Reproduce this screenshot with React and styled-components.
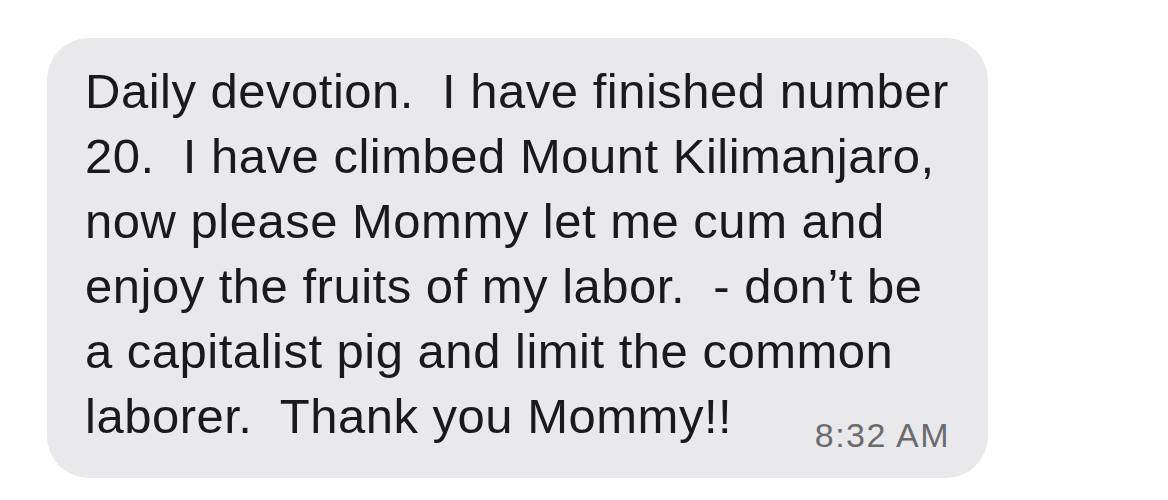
import React from "react";
import styled, { createGlobalStyle } from "styled-components";

const GlobalStyle = createGlobalStyle`
  html, body {
    margin: 0;
    padding: 0;
    background: #ffffff;
  }
`;

const Page = styled.div`
  width: 1168px;
  height: 500px;
  padding: 38px 0 0 47px;
  box-sizing: border-box;
  font-family: "Liberation Sans", Arial, sans-serif;
`;

const Bubble = styled.div`
  width: 941px;
  height: 440px;
  box-sizing: border-box;
  padding: 21px 38px 0 38px;
  background: #e9e9eb;
  border-radius: 42px;
  color: #1a1a1c;
`;

const Line = styled.div`
  font-size: 49px;
  line-height: 65px;
  letter-spacing: 0.5px;
  white-space: pre;
`;

const LastRow = styled.div`
  display: flex;
  justify-content: space-between;
  align-items: flex-end;
`;

const Time = styled.span`
  font-size: 34px;
  line-height: 34px;
  letter-spacing: 1.5px;
  color: #6b6b6e;
  margin-right: 0;
  margin-bottom: -3px;
`;

const lines = [
  "Daily devotion.  I have finished number",
  "20.  I have climbed Mount Kilimanjaro,",
  "now please Mommy let me cum and",
  "enjoy the fruits of my labor.  - don\u2019t be",
  "a capitalist pig and limit the common",
];

export default function App() {
  return (
    <>
      <GlobalStyle />
      <Page>
        <Bubble>
          {lines.map((t, i) => (
            <Line key={i}>{t}</Line>
          ))}
          <LastRow>
            <Line>laborer.  Thank you Mommy!!</Line>
            <Time>8:32 AM</Time>
          </LastRow>
        </Bubble>
      </Page>
    </>
  );
}
